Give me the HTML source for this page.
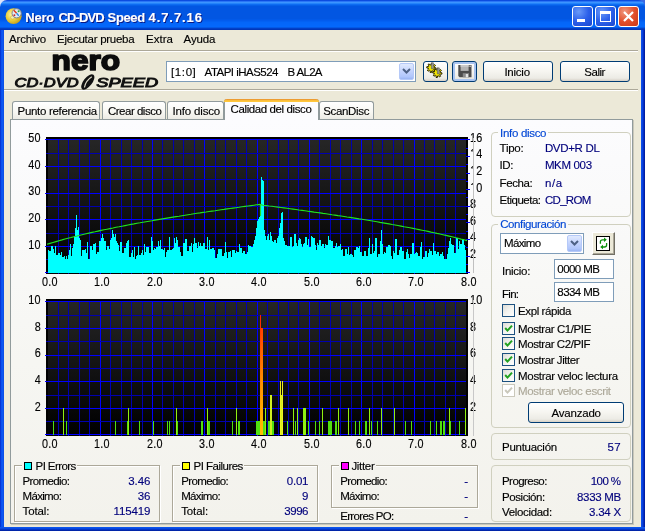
<!DOCTYPE html>
<html lang="es"><head><meta charset="utf-8"><title>Nero CD-DVD Speed 4.7.7.16</title>
<style>
html,body{margin:0;padding:0;background:#ece9d8;}
body{width:645px;height:531px;overflow:hidden;font-family:"Liberation Sans",sans-serif;font-size:11px;}
#win{will-change:transform;position:relative;width:645px;height:531px;overflow:hidden;background:#ece9d8;}
.abs{position:absolute;}
.t{position:absolute;white-space:nowrap;line-height:14px;height:14px;font-size:11.5px;-webkit-text-stroke:0.14px currentColor;}
#cornerL{position:absolute;left:0;top:0;width:8px;height:8px;background:#dde3fa;}
#cornerR{position:absolute;right:0;top:0;width:8px;height:8px;background:#3a68e2;}
#title{position:absolute;left:0;top:0;width:645px;height:30px;border-radius:7px 7px 0 0;
 background:linear-gradient(to bottom,#0c4ce0 0.5px,#2a76f6 1.5px,#3c94ff 2.5px,#2484fa 3.5px,#0e6cf2 4.5px,#0560e8 5.5px,#0256e2 6.5px,#0256e2 18.5px,#025cee 20.5px,#0466f8 22.5px,#0468fc 26.5px,#035ae6 27.5px,#0240c8 28.5px,#0136b8 29.5px);}
#frameL{position:absolute;left:0;top:30px;width:4px;height:501px;background:linear-gradient(to right,#0428c8 0,#0850ee 35%,#0c58f2 60%,#0a4ce2 100%);}
#frameR{position:absolute;right:0;top:30px;width:4px;height:501px;background:linear-gradient(to right,#0c54ee 0,#0840dc 40%,#0228bc 70%,#001890 100%);}
#frameB{position:absolute;left:0;bottom:0;width:645px;height:4px;background:linear-gradient(to bottom,#0c5af0 0,#0848e0 40%,#0230c0 70%,#001c98 100%);}
.tb{position:absolute;top:6px;width:21px;height:21px;box-sizing:border-box;border:1px solid #fff;border-radius:3px;
 background:radial-gradient(circle at 30% 25%,#6a9af8 0,#2c60ea 50%,#1846d0 100%);}
.tb.close{background:radial-gradient(circle at 30% 25%,#f09880 0,#e2502c 50%,#c83818 100%);}
.hsep{position:absolute;left:4px;width:634px;height:1px;}
.btn{position:absolute;box-sizing:border-box;border:1px solid #003c74;border-radius:3px;
 background:linear-gradient(to bottom,#ffffff 0,#f6f5f0 50%,#ecebe5 85%,#d6d0c5 100%);}
.btn.def{box-shadow:inset 0 0 0 2px #a9c4f0;}
.combo{position:absolute;box-sizing:border-box;border:1px solid #7f9db9;background:#fff;}
.dd{position:absolute;box-sizing:border-box;border:1px solid #b5c9f8;border-radius:2px;
 background:linear-gradient(to bottom,#e1eafe 0,#c3d3fd 50%,#b0c6fb 85%,#9ab4f2 100%);}
.edit{position:absolute;box-sizing:border-box;border:1px solid #7f9db9;background:#fff;}
.tab{position:absolute;box-sizing:border-box;border:1px solid #919b9c;border-bottom:none;border-radius:3px 3px 0 0;
 background:linear-gradient(to bottom,#ffffff 0,#f7f7f2 60%,#ecebe4 100%);}
.tab.act{background:#fcfcfe;border-top:none;}
.tab.act:before{content:"";position:absolute;left:-1px;right:-1px;top:0;height:3px;border-radius:3px 3px 0 0;
 background:linear-gradient(to bottom,#e68b2c 0,#ffc73c 60%,#ffc73c 100%);}
#page{position:absolute;left:10px;top:119px;width:623px;height:405px;box-sizing:border-box;border:1px solid #919b9c;
 background:linear-gradient(to bottom,#fcfcfe 0,#f6f6f2 60%,#f3f2ec 100%);box-shadow:1px 1px 0 #c9c7ba;}
.gb{position:absolute;box-sizing:border-box;border:1px solid #d0d0bf;border-radius:4px;}
.gbe{position:absolute;box-sizing:border-box;border:1px solid #aca899;box-shadow:1px 1px 0 #fff, inset 1px 1px 0 #fff;}
.leg{position:absolute;height:4px;}
.sq{position:absolute;box-sizing:border-box;width:8px;height:8px;border:1px solid #000;}
.cb{position:absolute;box-sizing:border-box;width:13px;height:13px;border:1px solid #1c5180;
 background:linear-gradient(135deg,#dcdcd7 0,#f3f3ef 50%,#ffffff 100%);}
.cb.dis{border-color:#cac8bb;background:#fff;}

</style></head>
<body>
<div id="win">
<div id="cornerL"></div><div id="cornerR"></div>
<div id="title"></div>
<div id="frameL"></div><div id="frameR"></div><div id="frameB"></div>
<!-- title icon -->
<svg class="abs" style="left:5px;top:7px" width="18" height="18" viewBox="0 0 18 18">
 <defs><radialGradient id="gold" cx="0.38" cy="0.4" r="0.75"><stop offset="0" stop-color="#fff8a8"/><stop offset="0.45" stop-color="#ecd040"/><stop offset="0.85" stop-color="#c8a018"/><stop offset="1" stop-color="#98780c"/></radialGradient></defs>
 <ellipse cx="8.6" cy="9.2" rx="8" ry="7.9" fill="url(#gold)"/>
 <ellipse cx="7.6" cy="10.4" rx="2" ry="1.7" fill="#f6eeb4" stroke="#c8a828" stroke-width="0.5"/>
 <circle cx="11.6" cy="6.3" r="4.6" fill="#e4ecf4" stroke="#7c848e" stroke-width="1"/>
 <path d="M11.6 6.3L8.8 3.2" stroke="#e03818" stroke-width="1.4"/>
 <path d="M11.6 6.3l2.2 2.4" stroke="#2888e8" stroke-width="1.4"/>
 <circle cx="13.6" cy="4.2" r="1" fill="#28a848"/>
 <circle cx="9.4" cy="8.3" r="1" fill="#c82828"/>
</svg>
<div class="tb" style="left:572px"><div class="abs" style="left:4px;top:12px;width:8px;height:3px;background:#fff"></div></div>
<div class="tb" style="left:595px"><div class="abs" style="left:4px;top:4px;width:11px;height:11px;box-sizing:border-box;border:1px solid #fff;border-top-width:3px"></div></div>
<div class="tb close" style="left:618px"><svg class="abs" style="left:0;top:0" width="19" height="19" viewBox="0 0 19 19"><path d="M5 5l9 9M14 5l-9 9" stroke="#fff" stroke-width="2.2" fill="none"/></svg></div>

<!-- toolbar separators -->
<div class="hsep" style="top:50px;background:#aca899"></div><div class="hsep" style="top:51px;background:#fff"></div>
<div class="hsep" style="top:89px;background:#aca899"></div><div class="hsep" style="top:90px;background:#fff"></div>

<!-- logo -->
<svg class="abs" style="left:8px;top:50px" width="156" height="40" viewBox="8 50 156 40">
 <text x="51.6" y="69.8" font-family="Liberation Sans, sans-serif" font-weight="bold" font-size="28" textLength="68.5" lengthAdjust="spacingAndGlyphs" fill="#0c0c0c" stroke="#0c0c0c" stroke-width="1.7" stroke-linejoin="round">nero</text>
 <text x="14.6" y="86.8" font-family="Liberation Sans, sans-serif" font-style="italic" font-size="12.6" textLength="64" lengthAdjust="spacingAndGlyphs" fill="#111" stroke="#111" stroke-width="0.9">CD·DVD</text>
 <text x="96.2" y="86.8" font-family="Liberation Sans, sans-serif" font-style="italic" font-size="12.6" textLength="62" lengthAdjust="spacingAndGlyphs" fill="#111" stroke="#111" stroke-width="0.9">SPEED</text>
 <g transform="translate(87.8 81.9) rotate(-52)"><ellipse cx="0" cy="0" rx="9.2" ry="4.3" fill="#111"/><path d="M-6.5 0.8C-2 -1.6 2 -1.6 6.5 0" stroke="#ddd9c8" stroke-width="1.2" fill="none"/></g>
</svg>

<!-- drive combobox -->
<div class="combo" style="left:166px;top:61px;width:250px;height:21px"></div>
<div class="dd" style="left:399px;top:63px;width:15px;height:17px"></div>
<svg class="abs" style="left:402px;top:68px" width="9" height="7" viewBox="0 0 9 7"><path d="M1 1l3.5 3.5L8 1" stroke="#4d6185" stroke-width="2" fill="none"/></svg>

<!-- toolbar buttons -->
<div class="btn" style="left:423px;top:61px;width:25px;height:21px"></div>
<svg class="abs" style="left:423px;top:61px" width="25" height="21" viewBox="0 0 25 21">
 <path d="M13.10 6.90L12.92 8.18L11.26 8.09L10.83 8.82L11.72 10.22L10.70 11.00L9.59 9.76L8.76 9.98L8.40 11.60L7.12 11.42L7.21 9.76L6.48 9.33L5.08 10.22L4.30 9.20L5.54 8.09L5.32 7.26L3.70 6.90L3.88 5.62L5.54 5.71L5.97 4.98L5.08 3.58L6.10 2.80L7.21 4.04L8.04 3.82L8.40 2.20L9.68 2.38L9.59 4.04L10.32 4.47L11.72 3.58L12.50 4.60L11.26 5.71L11.48 6.54Z" fill="#f4e800" stroke="#2a2400" stroke-width="1" stroke-linejoin="round"/>
 <path d="M19.00 11.90L18.82 13.18L17.16 13.09L16.73 13.82L17.62 15.22L16.60 16.00L15.49 14.76L14.66 14.98L14.30 16.60L13.02 16.42L13.11 14.76L12.38 14.33L10.98 15.22L10.20 14.20L11.44 13.09L11.22 12.26L9.60 11.90L9.78 10.62L11.44 10.71L11.87 9.98L10.98 8.58L12.00 7.80L13.11 9.04L13.94 8.82L14.30 7.20L15.58 7.38L15.49 9.04L16.22 9.47L17.62 8.58L18.40 9.60L17.16 10.71L17.38 11.54Z" fill="#f4e800" stroke="#2a2400" stroke-width="1" stroke-linejoin="round"/>
 <path d="M8.4 1.8h2v6h-2z" fill="#9a9a9a" stroke="#444" stroke-width="0.5"/>
 <path d="M14.3 6.9h2v6h-2z" fill="#9a9a9a" stroke="#444" stroke-width="0.5"/>
</svg>
<div class="btn def" style="left:452px;top:61px;width:25px;height:21px"></div>
<svg class="abs" style="left:458px;top:64px" width="14" height="14" viewBox="0 0 14 14">
 <path d="M0.3 1h13.2v12.3H1.6L0.3 12z" fill="#4c4c4c"/>
 <rect x="2.6" y="1" width="8" height="5.9" fill="#b4b4b4"/>
 <rect x="2.6" y="1" width="8" height="2" fill="#c8c8c8"/>
 <rect x="4.8" y="9.2" width="6.2" height="4.1" fill="#8c8c8c"/>
 <rect x="7.8" y="10" width="2.2" height="3.3" fill="#e4e4e4"/>
 <rect x="11.5" y="1.6" width="1.2" height="1.2" fill="#fff"/>
</svg>
<div class="btn" style="left:483px;top:61px;width:70px;height:21px"></div>
<div class="btn" style="left:560px;top:61px;width:70px;height:21px"></div>

<!-- tabs -->
<div id="page"></div>
<div class="tab" style="left:12px;top:101px;width:88px;height:18px"></div>
<div class="tab" style="left:102px;top:101px;width:64px;height:18px"></div>
<div class="tab" style="left:167px;top:101px;width:57px;height:18px"></div>
<div class="tab" style="left:319px;top:101px;width:55px;height:18px"></div>
<div class="tab act" style="left:224px;top:99px;width:95px;height:21px"></div>

<!-- right group boxes -->
<div class="gb" style="left:491px;top:132px;width:140px;height:85px"></div>
<div class="leg" style="left:498px;top:130px;width:50px;background:#fbfbfc"></div>
<div class="gb" style="left:491px;top:224px;width:140px;height:204px"></div>
<div class="leg" style="left:498px;top:222px;width:70px;background:#f9f9f8"></div>
<div class="gb" style="left:491px;top:433px;width:140px;height:27px"></div>
<div class="gb" style="left:491px;top:465px;width:140px;height:57px"></div>

<div class="combo" style="left:500px;top:233px;width:84px;height:21px"></div>
<div class="dd" style="left:567px;top:235px;width:15px;height:17px"></div>
<svg class="abs" style="left:570px;top:240px" width="9" height="7" viewBox="0 0 9 7"><path d="M1 1l3.5 3.5L8 1" stroke="#4d6185" stroke-width="2" fill="none"/></svg>
<!-- refresh button classic -->
<div class="abs" style="left:592px;top:232px;width:23px;height:23px;box-sizing:border-box;background:#ece9d8;border:1px solid;border-color:#fff #716f64 #716f64 #fff;box-shadow:inset -1px -1px 0 #aca899"></div>
<div class="abs" style="left:596px;top:236px;width:14px;height:15px;box-sizing:border-box;background:#fff;border:1px solid #000"></div>
<svg class="abs" style="left:596px;top:235px" width="15" height="17" viewBox="0 0 15 17">
 <g fill="none" stroke="#0e900e" stroke-width="1.3"><path d="M4.4 8.8V6.8Q4.4 4.8 6.6 4.8H8.4"/><path d="M10.6 8V10Q10.6 12 8.4 12H6.6"/></g>
 <path d="M8 2.6l2.8 2.2-2.8 2.2z" fill="#0e900e"/><path d="M7 9.8l-2.8 2.2 2.8 2.2z" fill="#0e900e"/>
</svg>

<div class="edit" style="left:554px;top:259px;width:60px;height:20px"></div>
<div class="edit" style="left:554px;top:282px;width:60px;height:20px"></div>

<div class="cb" style="left:502px;top:304px"></div>
<div class="cb" style="left:502px;top:322px"></div>
<div class="cb" style="left:502px;top:337px"></div>
<div class="cb" style="left:502px;top:353px"></div>
<div class="cb" style="left:502px;top:369px"></div>
<div class="cb dis" style="left:502px;top:384px"></div>
<svg class="abs" style="left:502px;top:322px" width="13" height="76" viewBox="0 0 13 76">
 <g fill="none" stroke="#21a121" stroke-width="2">
 <path d="M3.2 6l2.3 2.6L10 3.6"/><path d="M3.2 21l2.3 2.6L10 18.6"/><path d="M3.2 37l2.3 2.6L10 34.6"/><path d="M3.2 53l2.3 2.6L10 50.6"/>
 <path d="M3.2 68l2.3 2.6L10 65.6" stroke="#cac8bb"/></g>
</svg>
<div class="btn" style="left:528px;top:402px;width:96px;height:21px"></div>

<!-- bottom group boxes (classic etched) -->
<div class="gbe" style="left:14px;top:465px;width:146px;height:57px"></div>
<div class="leg" style="left:22px;top:463px;width:55px;height:5px;background:#f4f3ee"></div>
<div class="sq" style="left:24px;top:462px;background:#00ffff"></div>
<div class="gbe" style="left:172px;top:465px;width:146px;height:57px"></div>
<div class="leg" style="left:180px;top:463px;width:64px;height:5px;background:#f4f3ee"></div>
<div class="sq" style="left:182px;top:462px;background:#ffff00"></div>
<div class="gbe" style="left:331px;top:465px;width:147px;height:43px"></div>
<div class="leg" style="left:339px;top:463px;width:37px;height:5px;background:#f4f3ee"></div>
<div class="sq" style="left:341px;top:462px;background:#ff00ff"></div>


<svg class="abs" style="left:0;top:0" width="645" height="531" viewBox="0 0 645 531">
<defs><linearGradient id="bg" x1="0" y1="0" x2="0" y2="1"><stop offset="0" stop-color="#262626"/><stop offset="1" stop-color="#000"/></linearGradient><linearGradient id="hot" x1="0" y1="0" x2="0" y2="1"><stop offset="0" stop-color="#ff4000"/><stop offset="0.5" stop-color="#ff9000"/><stop offset="1" stop-color="#ffc000"/></linearGradient><linearGradient id="hot2" x1="0" y1="0" x2="0" y2="1"><stop offset="0" stop-color="#ff2000"/><stop offset="0.5" stop-color="#ff8000"/><stop offset="1" stop-color="#ffc000"/></linearGradient></defs>
<g shape-rendering="crispEdges">
<rect x="46" y="137" width="422" height="137" fill="#000"/>
<rect x="48" y="139" width="418" height="133.5" fill="url(#bg)"/>
<line x1="58.5" x2="58.5" y1="139.5" y2="274" stroke="#0000b0"/>
<line x1="68.5" x2="68.5" y1="139.5" y2="274" stroke="#0000b0"/>
<line x1="79.5" x2="79.5" y1="139.5" y2="274" stroke="#0000b0"/>
<line x1="89.5" x2="89.5" y1="139.5" y2="274" stroke="#0000b0"/>
<line x1="100.5" x2="100.5" y1="139.5" y2="274" stroke="#0000ff"/>
<line x1="110.5" x2="110.5" y1="139.5" y2="274" stroke="#0000b0"/>
<line x1="121.5" x2="121.5" y1="139.5" y2="274" stroke="#0000b0"/>
<line x1="131.5" x2="131.5" y1="139.5" y2="274" stroke="#0000b0"/>
<line x1="142.5" x2="142.5" y1="139.5" y2="274" stroke="#0000b0"/>
<line x1="152.5" x2="152.5" y1="139.5" y2="274" stroke="#0000ff"/>
<line x1="162.5" x2="162.5" y1="139.5" y2="274" stroke="#0000b0"/>
<line x1="173.5" x2="173.5" y1="139.5" y2="274" stroke="#0000b0"/>
<line x1="183.5" x2="183.5" y1="139.5" y2="274" stroke="#0000b0"/>
<line x1="194.5" x2="194.5" y1="139.5" y2="274" stroke="#0000b0"/>
<line x1="204.5" x2="204.5" y1="139.5" y2="274" stroke="#0000ff"/>
<line x1="215.5" x2="215.5" y1="139.5" y2="274" stroke="#0000b0"/>
<line x1="225.5" x2="225.5" y1="139.5" y2="274" stroke="#0000b0"/>
<line x1="236.5" x2="236.5" y1="139.5" y2="274" stroke="#0000b0"/>
<line x1="246.5" x2="246.5" y1="139.5" y2="274" stroke="#0000b0"/>
<line x1="257.5" x2="257.5" y1="139.5" y2="274" stroke="#0000ff"/>
<line x1="267.5" x2="267.5" y1="139.5" y2="274" stroke="#0000b0"/>
<line x1="278.5" x2="278.5" y1="139.5" y2="274" stroke="#0000b0"/>
<line x1="288.5" x2="288.5" y1="139.5" y2="274" stroke="#0000b0"/>
<line x1="298.5" x2="298.5" y1="139.5" y2="274" stroke="#0000b0"/>
<line x1="309.5" x2="309.5" y1="139.5" y2="274" stroke="#0000ff"/>
<line x1="319.5" x2="319.5" y1="139.5" y2="274" stroke="#0000b0"/>
<line x1="330.5" x2="330.5" y1="139.5" y2="274" stroke="#0000b0"/>
<line x1="340.5" x2="340.5" y1="139.5" y2="274" stroke="#0000b0"/>
<line x1="351.5" x2="351.5" y1="139.5" y2="274" stroke="#0000b0"/>
<line x1="361.5" x2="361.5" y1="139.5" y2="274" stroke="#0000ff"/>
<line x1="372.5" x2="372.5" y1="139.5" y2="274" stroke="#0000b0"/>
<line x1="382.5" x2="382.5" y1="139.5" y2="274" stroke="#0000b0"/>
<line x1="393.5" x2="393.5" y1="139.5" y2="274" stroke="#0000b0"/>
<line x1="403.5" x2="403.5" y1="139.5" y2="274" stroke="#0000b0"/>
<line x1="414.5" x2="414.5" y1="139.5" y2="274" stroke="#0000ff"/>
<line x1="424.5" x2="424.5" y1="139.5" y2="274" stroke="#0000b0"/>
<line x1="434.5" x2="434.5" y1="139.5" y2="274" stroke="#0000b0"/>
<line x1="445.5" x2="445.5" y1="139.5" y2="274" stroke="#0000b0"/>
<line x1="455.5" x2="455.5" y1="139.5" y2="274" stroke="#0000b0"/>
<line x1="45" x2="466" y1="139.5" y2="139.5" stroke="#0000ff"/>
<line x1="46" x2="466" y1="153.5" y2="153.5" stroke="#0000b0"/>
<line x1="45" x2="466" y1="166.5" y2="166.5" stroke="#0000ff"/>
<line x1="46" x2="466" y1="179.5" y2="179.5" stroke="#0000b0"/>
<line x1="45" x2="466" y1="193.5" y2="193.5" stroke="#0000ff"/>
<line x1="46" x2="466" y1="206.5" y2="206.5" stroke="#0000b0"/>
<line x1="45" x2="466" y1="219.5" y2="219.5" stroke="#0000ff"/>
<line x1="46" x2="466" y1="233.5" y2="233.5" stroke="#0000b0"/>
<line x1="45" x2="466" y1="246.5" y2="246.5" stroke="#0000ff"/>
<line x1="46" x2="466" y1="259.5" y2="259.5" stroke="#0000b0"/>
<line x1="45" x2="466" y1="272.5" y2="272.5" stroke="#0000ff"/>
<line x1="466" x2="470" y1="139.5" y2="139.5" stroke="#0000ff"/>
<line x1="466" x2="468" y1="148.5" y2="148.5" stroke="#0000ff"/>
<line x1="466" x2="470" y1="156.5" y2="156.5" stroke="#0000ff"/>
<line x1="466" x2="468" y1="164.5" y2="164.5" stroke="#0000ff"/>
<line x1="466" x2="470" y1="173.5" y2="173.5" stroke="#0000ff"/>
<line x1="466" x2="468" y1="181.5" y2="181.5" stroke="#0000ff"/>
<line x1="466" x2="470" y1="189.5" y2="189.5" stroke="#0000ff"/>
<line x1="466" x2="468" y1="197.5" y2="197.5" stroke="#0000ff"/>
<line x1="466" x2="470" y1="206.5" y2="206.5" stroke="#0000ff"/>
<line x1="466" x2="468" y1="214.5" y2="214.5" stroke="#0000ff"/>
<line x1="466" x2="470" y1="222.5" y2="222.5" stroke="#0000ff"/>
<line x1="466" x2="468" y1="231.5" y2="231.5" stroke="#0000ff"/>
<line x1="466" x2="470" y1="239.5" y2="239.5" stroke="#0000ff"/>
<line x1="466" x2="468" y1="247.5" y2="247.5" stroke="#0000ff"/>
<line x1="466" x2="470" y1="256.5" y2="256.5" stroke="#0000ff"/>
<line x1="466" x2="468" y1="264.5" y2="264.5" stroke="#0000ff"/>
<line x1="466" x2="470" y1="272.5" y2="272.5" stroke="#0000ff"/>
</g>
<path d="M48 273L48 249.5h1L49 250.5h1L50 250.5h1L51 245.6h1L52 245.6h1L53 249.3h1L54 252.6h1L55 245.9h1L56 254.9h1L57 255.3h1L58 252.6h1L59 252.6h1L60 254.7h1L61 252.0h1L62 256.5h1L63 256.5h1L64 255.8h1L65 258.9h1L66 256.2h1L67 258.9h1L68 255.3h1L69 250.3h1L70 243.9h1L71 256.2h1L72 248.4h1L73 243.7h1L74 235.8h1L75 227.8h1L76 214.5h1L77 230.4h1L78 227.2h1L79 238.4h1L80 240.3h1L81 255.8h1L82 249.6h1L83 249.6h1L84 249.9h1L85 249.0h1L86 253.2h1L87 242.3h1L88 258.9h1L89 258.9h1L90 246.2h1L91 246.2h1L92 249.6h1L93 244.0h1L94 244.0h1L95 242.7h1L96 253.5h1L97 251.9h1L98 251.9h1L99 241.1h1L100 241.1h1L101 238.4h1L102 233.9h1L103 238.4h1L104 240.5h1L105 240.5h1L106 249.5h1L107 246.1h1L108 246.1h1L109 248.5h1L110 240.1h1L111 238.4h1L112 230.4h1L113 234.4h1L114 237.1h1L115 234.4h1L116 241.1h1L117 243.2h1L118 245.2h1L119 250.5h1L120 241.8h1L121 241.8h1L122 252.8h1L123 252.8h1L124 247.7h1L125 247.7h1L126 243.4h1L127 241.1h1L128 239.8h1L129 256.8h1L130 256.8h1L131 253.1h1L132 249.9h1L133 256.5h1L134 246.9h1L135 258.9h1L136 256.1h1L137 255.0h1L138 245.5h1L139 255.3h1L140 255.3h1L141 252.8h1L142 250.2h1L143 254.8h1L144 244.1h1L145 252.2h1L146 246.8h1L147 246.5h1L148 246.5h1L149 253.3h1L150 253.3h1L151 237.4h1L152 241.1h1L153 250.0h1L154 247.9h1L155 248.5h1L156 246.5h1L157 247.3h1L158 241.4h1L159 245.8h1L160 239.8h1L161 248.6h1L162 248.6h1L163 249.6h1L164 248.2h1L165 256.8h1L166 251.6h1L167 250.2h1L168 250.2h1L169 237.2h1L170 249.7h1L171 249.7h1L172 249.0h1L173 248.1h1L174 238.4h1L175 242.8h1L176 237.1h1L177 240.3h1L178 247.1h1L179 247.1h1L180 252.1h1L181 255.8h1L182 255.8h1L183 242.5h1L184 242.5h1L185 238.9h1L186 238.9h1L187 250.7h1L188 250.7h1L189 246.2h1L190 246.2h1L191 242.7h1L192 251.6h1L193 244.4h1L194 238.0h1L195 242.6h1L196 242.6h1L197 248.1h1L198 242.2h1L199 246.3h1L200 242.9h1L201 245.8h1L202 245.7h1L203 243.0h1L204 243.0h1L205 249.3h1L206 249.3h1L207 236.9h1L208 250.1h1L209 239.6h1L210 248.6h1L211 248.6h1L212 248.4h1L213 248.4h1L214 250.4h1L215 258.2h1L216 258.2h1L217 253.7h1L218 248.8h1L219 248.8h1L220 248.5h1L221 248.5h1L222 256.0h1L223 256.0h1L224 253.0h1L225 242.2h1L226 252.4h1L227 258.2h1L228 251.5h1L229 251.6h1L230 251.1h1L231 256.7h1L232 250.0h1L233 249.8h1L234 249.8h1L235 253.0h1L236 250.5h1L237 251.5h1L238 251.5h1L239 243.6h1L240 247.5h1L241 247.5h1L242 253.0h1L243 251.0h1L244 251.0h1L245 254.2h1L246 254.2h1L247 252.1h1L248 244.7h1L249 245.5h1L250 245.5h1L251 247.1h1L252 247.1h1L253 244.0h1L254 239.8h1L255 235.8h1L256 227.8h1L257 221.1h1L258 218.5h1L259 217.1h1L260 214.5h1L261 177.2h1L262 179.9h1L263 181.2h1L264 230.4h1L265 235.8h1L266 239.8h1L267 235.8h1L268 234.4h1L269 239.8h1L270 231.8h1L271 235.8h1L272 241.1h1L273 242.3h1L274 240.2h1L275 240.2h1L276 242.6h1L277 238.4h1L278 235.8h1L279 227.8h1L280 222.5h1L281 212.6h1L282 211.8h1L283 238.4h1L284 241.1h1L285 245.1h1L286 245.1h1L287 246.0h1L288 246.0h1L289 246.1h1L290 236.5h1L291 236.5h1L292 246.6h1L293 246.4h1L294 233.9h1L295 233.9h1L296 243.4h1L297 245.9h1L298 240.0h1L299 237.7h1L300 238.7h1L301 244.3h1L302 247.4h1L303 243.9h1L304 242.6h1L305 237.4h1L306 237.4h1L307 244.8h1L308 238.7h1L309 246.9h1L310 246.9h1L311 235.8h1L312 237.1h1L313 238.0h1L314 238.0h1L315 244.5h1L316 249.7h1L317 242.8h1L318 244.7h1L319 240.2h1L320 240.2h1L321 245.6h1L322 244.3h1L323 244.3h1L324 247.5h1L325 244.1h1L326 244.5h1L327 244.5h1L328 236.3h1L329 240.3h1L330 240.3h1L331 240.9h1L332 240.9h1L333 247.9h1L334 247.9h1L335 245.6h1L336 243.3h1L337 246.6h1L338 246.3h1L339 246.3h1L340 243.9h1L341 249.5h1L342 248.7h1L343 255.6h1L344 255.6h1L345 248.6h1L346 248.6h1L347 254.3h1L348 247.2h1L349 254.6h1L350 253.8h1L351 253.8h1L352 254.5h1L353 257.2h1L354 250.2h1L355 250.2h1L356 247.0h1L357 247.0h1L358 247.9h1L359 245.9h1L360 252.4h1L361 252.4h1L362 255.7h1L363 256.4h1L364 250.7h1L365 250.7h1L366 255.7h1L367 255.7h1L368 248.1h1L369 237.9h1L370 253.8h1L371 253.8h1L372 243.5h1L373 252.7h1L374 250.8h1L375 237.5h1L376 237.5h1L377 256.9h1L378 254.4h1L379 253.6h1L380 241.1h1L381 229.9h1L382 243.7h1L383 254.1h1L384 252.1h1L385 253.1h1L386 247.3h1L387 247.3h1L388 245.2h1L389 245.2h1L390 246.4h1L391 256.1h1L392 258.9h1L393 251.3h1L394 252.5h1L395 238.8h1L396 238.8h1L397 254.9h1L398 254.9h1L399 250.4h1L400 247.4h1L401 247.4h1L402 251.3h1L403 251.3h1L404 258.9h1L405 258.9h1L406 251.9h1L407 248.9h1L408 253.9h1L409 258.3h1L410 253.8h1L411 253.8h1L412 243.0h1L413 243.0h1L414 254.1h1L415 252.6h1L416 252.3h1L417 253.3h1L418 256.1h1L419 256.1h1L420 246.8h1L421 241.6h1L422 258.9h1L423 256.6h1L424 256.6h1L425 250.7h1L426 250.5h1L427 256.5h1L428 252.9h1L429 249.1h1L430 251.3h1L431 251.3h1L432 255.2h1L433 242.7h1L434 250.6h1L435 250.6h1L436 253.6h1L437 251.5h1L438 251.5h1L439 255.7h1L440 253.6h1L441 253.6h1L442 251.6h1L443 256.4h1L444 258.5h1L445 258.5h1L446 258.5h1L447 253.7h1L448 248.3h1L449 241.1h1L450 237.6h1L451 243.7h1L452 245.1h1L453 245.1h1L454 252.6h1L455 252.6h1L456 238.2h1L457 238.2h1L458 248.7h1L459 240.8h1L460 243.7h1L461 243.7h1L462 239.2h1L463 239.2h1L464 244.8h1L465 250.3h1L466 273Z" fill="#00ffff" shape-rendering="crispEdges"/>
<path d="M47.0 244.3L50.0 243.4L53.0 242.5L56.0 241.6L59.0 240.7L62.0 239.9L65.0 239.0L68.0 238.2L71.0 237.5L74.0 236.7L77.0 236.0L80.0 235.2L83.0 234.5L86.0 233.8L89.0 233.1L92.0 232.4L95.0 231.8L98.0 231.1L101.0 230.4L104.0 229.8L107.0 229.2L110.0 228.6L113.0 228.0L116.0 227.3L119.0 226.8L122.0 226.2L125.0 225.6L128.0 225.0L131.0 224.4L134.0 223.9L137.0 223.3L140.0 222.8L143.0 222.2L146.0 221.7L149.0 221.2L152.0 220.7L155.0 220.1L158.0 219.6L161.0 219.1L164.0 218.6L167.0 218.1L170.0 217.6L173.0 217.1L176.0 216.6L179.0 216.2L182.0 215.7L185.0 215.2L188.0 214.7L191.0 214.3L194.0 213.8L197.0 213.3L200.0 212.9L203.0 212.4L206.0 212.0L209.0 211.5L212.0 211.1L215.0 210.7L218.0 210.2L221.0 209.8L224.0 209.4L227.0 208.9L230.0 208.5L233.0 208.1L236.0 207.7L239.0 207.3L242.0 206.8L245.0 206.4L248.0 206.0L251.0 205.6L254.0 205.2L257.0 204.8L260.0 204.4L263.0 205.2L266.0 205.6L269.0 206.0L272.0 206.3L275.0 206.7L278.0 207.1L281.0 207.5L284.0 207.9L287.0 208.3L290.0 208.7L293.0 209.1L296.0 209.5L299.0 210.0L302.0 210.4L305.0 210.8L308.0 211.2L311.0 211.6L314.0 212.1L317.0 212.5L320.0 212.9L323.0 213.4L326.0 213.8L329.0 214.2L332.0 214.7L335.0 215.1L338.0 215.6L341.0 216.0L344.0 216.5L347.0 217.0L350.0 217.4L353.0 217.9L356.0 218.4L359.0 218.9L362.0 219.3L365.0 219.8L368.0 220.3L371.0 220.8L374.0 221.3L377.0 221.8L380.0 222.4L383.0 222.9L386.0 223.4L389.0 223.9L392.0 224.5L395.0 225.0L398.0 225.5L401.0 226.1L404.0 226.7L407.0 227.2L410.0 227.8L413.0 228.4L416.0 229.0L419.0 229.6L422.0 230.2L425.0 230.8L428.0 231.4L431.0 232.1L434.0 232.7L437.0 233.4L440.0 234.0L443.0 234.7L446.0 235.4L449.0 236.1L452.0 236.8L455.0 237.5L458.0 238.3L461.0 239.1L464.0 239.8L467.0 240.6" fill="none" stroke="#20e420" stroke-width="1.15"/>
<path d="M260.5 204V216" stroke="#22e222" stroke-width="1.2" fill="none"/>
<g shape-rendering="crispEdges">
<rect x="46" y="299" width="422" height="137" fill="#000"/>
<rect x="48" y="301" width="418" height="133.5" fill="url(#bg)"/>
<line x1="58.5" x2="58.5" y1="301.5" y2="436" stroke="#0000b0"/>
<line x1="68.5" x2="68.5" y1="301.5" y2="436" stroke="#0000b0"/>
<line x1="79.5" x2="79.5" y1="301.5" y2="436" stroke="#0000b0"/>
<line x1="89.5" x2="89.5" y1="301.5" y2="436" stroke="#0000b0"/>
<line x1="100.5" x2="100.5" y1="301.5" y2="436" stroke="#0000ff"/>
<line x1="110.5" x2="110.5" y1="301.5" y2="436" stroke="#0000b0"/>
<line x1="121.5" x2="121.5" y1="301.5" y2="436" stroke="#0000b0"/>
<line x1="131.5" x2="131.5" y1="301.5" y2="436" stroke="#0000b0"/>
<line x1="142.5" x2="142.5" y1="301.5" y2="436" stroke="#0000b0"/>
<line x1="152.5" x2="152.5" y1="301.5" y2="436" stroke="#0000ff"/>
<line x1="162.5" x2="162.5" y1="301.5" y2="436" stroke="#0000b0"/>
<line x1="173.5" x2="173.5" y1="301.5" y2="436" stroke="#0000b0"/>
<line x1="183.5" x2="183.5" y1="301.5" y2="436" stroke="#0000b0"/>
<line x1="194.5" x2="194.5" y1="301.5" y2="436" stroke="#0000b0"/>
<line x1="204.5" x2="204.5" y1="301.5" y2="436" stroke="#0000ff"/>
<line x1="215.5" x2="215.5" y1="301.5" y2="436" stroke="#0000b0"/>
<line x1="225.5" x2="225.5" y1="301.5" y2="436" stroke="#0000b0"/>
<line x1="236.5" x2="236.5" y1="301.5" y2="436" stroke="#0000b0"/>
<line x1="246.5" x2="246.5" y1="301.5" y2="436" stroke="#0000b0"/>
<line x1="257.5" x2="257.5" y1="301.5" y2="436" stroke="#0000ff"/>
<line x1="267.5" x2="267.5" y1="301.5" y2="436" stroke="#0000b0"/>
<line x1="278.5" x2="278.5" y1="301.5" y2="436" stroke="#0000b0"/>
<line x1="288.5" x2="288.5" y1="301.5" y2="436" stroke="#0000b0"/>
<line x1="298.5" x2="298.5" y1="301.5" y2="436" stroke="#0000b0"/>
<line x1="309.5" x2="309.5" y1="301.5" y2="436" stroke="#0000ff"/>
<line x1="319.5" x2="319.5" y1="301.5" y2="436" stroke="#0000b0"/>
<line x1="330.5" x2="330.5" y1="301.5" y2="436" stroke="#0000b0"/>
<line x1="340.5" x2="340.5" y1="301.5" y2="436" stroke="#0000b0"/>
<line x1="351.5" x2="351.5" y1="301.5" y2="436" stroke="#0000b0"/>
<line x1="361.5" x2="361.5" y1="301.5" y2="436" stroke="#0000ff"/>
<line x1="372.5" x2="372.5" y1="301.5" y2="436" stroke="#0000b0"/>
<line x1="382.5" x2="382.5" y1="301.5" y2="436" stroke="#0000b0"/>
<line x1="393.5" x2="393.5" y1="301.5" y2="436" stroke="#0000b0"/>
<line x1="403.5" x2="403.5" y1="301.5" y2="436" stroke="#0000b0"/>
<line x1="414.5" x2="414.5" y1="301.5" y2="436" stroke="#0000ff"/>
<line x1="424.5" x2="424.5" y1="301.5" y2="436" stroke="#0000b0"/>
<line x1="434.5" x2="434.5" y1="301.5" y2="436" stroke="#0000b0"/>
<line x1="445.5" x2="445.5" y1="301.5" y2="436" stroke="#0000b0"/>
<line x1="455.5" x2="455.5" y1="301.5" y2="436" stroke="#0000b0"/>
<line x1="45" x2="466" y1="301.5" y2="301.5" stroke="#0000ff"/>
<line x1="46" x2="466" y1="315.5" y2="315.5" stroke="#0000b0"/>
<line x1="45" x2="466" y1="328.5" y2="328.5" stroke="#0000ff"/>
<line x1="46" x2="466" y1="341.5" y2="341.5" stroke="#0000b0"/>
<line x1="45" x2="466" y1="355.5" y2="355.5" stroke="#0000ff"/>
<line x1="46" x2="466" y1="368.5" y2="368.5" stroke="#0000b0"/>
<line x1="45" x2="466" y1="381.5" y2="381.5" stroke="#0000ff"/>
<line x1="46" x2="466" y1="395.5" y2="395.5" stroke="#0000b0"/>
<line x1="45" x2="466" y1="408.5" y2="408.5" stroke="#0000ff"/>
<line x1="46" x2="466" y1="421.5" y2="421.5" stroke="#0000b0"/>
<line x1="45" x2="466" y1="434.5" y2="434.5" stroke="#0000ff"/>
<rect x="53" y="421.2" width="1" height="13.3" fill="#50e010"/>
<rect x="63" y="407.9" width="1" height="26.6" fill="#90f010"/>
<rect x="66" y="421.2" width="1" height="13.3" fill="#50e010"/>
<rect x="115" y="421.2" width="1" height="13.3" fill="#50e010"/>
<rect x="127" y="421.2" width="2" height="13.3" fill="#50e010"/>
<rect x="128" y="407.9" width="1" height="26.6" fill="#90f010"/>
<rect x="139" y="421.2" width="1" height="13.3" fill="#50e010"/>
<rect x="153" y="421.2" width="1" height="13.3" fill="#50e010"/>
<rect x="167" y="421.2" width="1" height="13.3" fill="#50e010"/>
<rect x="169" y="421.2" width="1" height="13.3" fill="#50e010"/>
<rect x="176" y="407.9" width="1" height="26.6" fill="#90f010"/>
<rect x="177" y="421.2" width="1" height="13.3" fill="#50e010"/>
<rect x="201" y="421.2" width="2" height="13.3" fill="#50e010"/>
<rect x="207" y="407.9" width="1" height="26.6" fill="#90f010"/>
<rect x="208" y="421.2" width="2" height="13.3" fill="#50e010"/>
<rect x="232" y="421.2" width="1" height="13.3" fill="#50e010"/>
<rect x="236" y="407.9" width="1" height="26.6" fill="#90f010"/>
<rect x="238" y="421.2" width="2" height="13.3" fill="#50e010"/>
<rect x="256" y="421.2" width="4" height="13.3" fill="#50e010"/>
<rect x="263" y="421.2" width="2" height="13.3" fill="#50e010"/>
<rect x="265" y="407.9" width="1" height="26.6" fill="#90f010"/>
<rect x="268" y="421.2" width="2" height="13.3" fill="#50e010"/>
<rect x="270" y="394.6" width="2" height="39.9" fill="#d0f020"/>
<rect x="272" y="421.2" width="2" height="13.3" fill="#50e010"/>
<rect x="280" y="394.6" width="3" height="39.9" fill="#d0f020"/>
<rect x="280" y="381.3" width="1" height="53.2" fill="#f0f020"/>
<rect x="282" y="381.3" width="1" height="53.2" fill="#f0f020"/>
<rect x="287" y="421.2" width="1" height="13.3" fill="#50e010"/>
<rect x="293" y="407.9" width="1" height="26.6" fill="#90f010"/>
<rect x="295" y="421.2" width="1" height="13.3" fill="#50e010"/>
<rect x="297" y="407.9" width="1" height="26.6" fill="#90f010"/>
<rect x="303" y="407.9" width="3" height="26.6" fill="#90f010"/>
<rect x="308" y="421.2" width="1" height="13.3" fill="#50e010"/>
<rect x="315" y="421.2" width="1" height="13.3" fill="#50e010"/>
<rect x="319" y="421.2" width="1" height="13.3" fill="#50e010"/>
<rect x="322" y="407.9" width="1" height="26.6" fill="#90f010"/>
<rect x="328" y="421.2" width="4" height="13.3" fill="#50e010"/>
<rect x="335" y="421.2" width="2" height="13.3" fill="#50e010"/>
<rect x="338" y="407.9" width="1" height="26.6" fill="#90f010"/>
<rect x="348" y="407.9" width="1" height="26.6" fill="#90f010"/>
<rect x="355" y="421.2" width="1" height="13.3" fill="#50e010"/>
<rect x="359" y="421.2" width="1" height="13.3" fill="#50e010"/>
<rect x="365" y="421.2" width="2" height="13.3" fill="#50e010"/>
<rect x="369" y="407.9" width="1" height="26.6" fill="#90f010"/>
<rect x="371" y="421.2" width="1" height="13.3" fill="#50e010"/>
<rect x="377" y="421.2" width="1" height="13.3" fill="#50e010"/>
<rect x="381" y="407.9" width="1" height="26.6" fill="#90f010"/>
<rect x="394" y="407.9" width="1" height="26.6" fill="#90f010"/>
<rect x="405" y="421.2" width="1" height="13.3" fill="#50e010"/>
<rect x="411" y="421.2" width="1" height="13.3" fill="#50e010"/>
<rect x="430" y="421.2" width="1" height="13.3" fill="#50e010"/>
<rect x="436" y="421.2" width="1" height="13.3" fill="#50e010"/>
<rect x="440" y="421.2" width="2" height="13.3" fill="#50e010"/>
<rect x="443" y="421.2" width="2" height="13.3" fill="#50e010"/>
<rect x="449" y="407.9" width="1" height="26.6" fill="#90f010"/>
<rect x="450" y="421.2" width="1" height="13.3" fill="#50e010"/>
<rect x="459" y="421.2" width="1" height="13.3" fill="#50e010"/>
<rect x="465" y="407.9" width="1" height="26.6" fill="#90f010"/>
<rect x="261" y="328.1" width="2" height="106.4" fill="url(#hot)"/>
<rect x="260" y="314.8" width="1.2" height="119.7" fill="url(#hot2)"/>
</g>
</svg>
<span class="t" id="t0" style="top:11px;color:#fff;font-size:13px;font-weight:bold;text-shadow:1px 1px 0 #0a1883;letter-spacing:-0.256px;left:25.30px;">Nero</span>
<span class="t" id="t1" style="top:11px;color:#fff;font-size:13px;font-weight:bold;text-shadow:1px 1px 0 #0a1883;letter-spacing:-0.860px;left:58.40px;">CD-DVD</span>
<span class="t" id="t2" style="top:11px;color:#fff;font-size:13px;font-weight:bold;text-shadow:1px 1px 0 #0a1883;letter-spacing:-0.363px;left:107.60px;">Speed</span>
<span class="t" id="t3" style="top:11px;color:#fff;font-size:13px;font-weight:bold;text-shadow:1px 1px 0 #0a1883;letter-spacing:0.900px;left:148.60px;">4.7.7.16</span>
<span class="t" id="t4" style="top:32px;color:#000;letter-spacing:-0.223px;left:9.10px;">Archivo</span>
<span class="t" id="t5" style="top:32px;color:#000;letter-spacing:-0.260px;left:57.10px;">Ejecutar prueba</span>
<span class="t" id="t6" style="top:32px;color:#000;letter-spacing:-0.009px;left:146.10px;">Extra</span>
<span class="t" id="t7" style="top:32px;color:#000;letter-spacing:-0.121px;left:183.60px;">Ayuda</span>
<span class="t" id="t8" style="top:65px;color:#000;letter-spacing:0.582px;left:171.10px;">[1:0]</span>
<span class="t" id="t9" style="top:65px;color:#000;letter-spacing:-0.524px;left:204.60px;">ATAPI iHAS524</span>
<span class="t" id="t10" style="top:65px;color:#000;left:287.40px;">B</span>
<span class="t" id="t11" style="top:65px;color:#000;letter-spacing:-0.760px;left:296.60px;">AL2A</span>
<span class="t" id="t12" style="top:65px;color:#000;letter-spacing:-0.243px;left:504.40px;">Inicio</span>
<span class="t" id="t13" style="top:65px;color:#000;letter-spacing:-0.483px;left:584.30px;">Salir</span>
<span class="t" id="t14" style="top:104px;color:#000;letter-spacing:-0.318px;left:17.60px;">Punto referencia</span>
<span class="t" id="t15" style="top:104px;color:#000;letter-spacing:-0.483px;left:107.90px;">Crear disco</span>
<span class="t" id="t16" style="top:104px;color:#000;letter-spacing:-0.173px;left:172.60px;">Info disco</span>
<span class="t" id="t17" style="top:102px;color:#000;letter-spacing:-0.400px;left:230.60px;">Calidad del disco</span>
<span class="t" id="t18" style="top:104px;color:#000;letter-spacing:-0.347px;left:323.30px;">ScanDisc</span>
<span class="t" id="t19" style="top:126px;color:#0046d5;letter-spacing:-0.313px;left:500.10px;">Info disco</span>
<span class="t" id="t20" style="top:141px;color:#000;letter-spacing:-0.268px;left:499.60px;">Tipo:</span>
<span class="t" id="t21" style="top:158px;color:#000;letter-spacing:-0.468px;left:499.60px;">ID:</span>
<span class="t" id="t22" style="top:176px;color:#000;letter-spacing:-0.395px;left:499.60px;">Fecha:</span>
<span class="t" id="t23" style="top:193px;color:#000;letter-spacing:-0.490px;left:499.60px;">Etiqueta:</span>
<span class="t" id="t24" style="top:141px;color:#00007c;letter-spacing:-0.325px;left:544.90px;">DVD+R DL</span>
<span class="t" id="t25" style="top:158px;color:#00007c;letter-spacing:-0.346px;left:544.90px;">MKM 003</span>
<span class="t" id="t26" style="top:176px;color:#00007c;letter-spacing:0.600px;left:544.90px;">n/a</span>
<span class="t" id="t27" style="top:193px;color:#00007c;letter-spacing:-0.674px;left:544.90px;">CD_ROM</span>
<span class="t" id="t28" style="top:217px;color:#0046d5;letter-spacing:-0.398px;left:500.20px;">Configuración</span>
<span class="t" id="t29" style="top:236px;color:#000;letter-spacing:-0.628px;left:504.00px;">Máximo</span>
<span class="t" id="t30" style="top:264px;color:#000;letter-spacing:-0.278px;left:502.00px;">Inicio:</span>
<span class="t" id="t31" style="top:287px;color:#000;letter-spacing:-0.718px;left:502.00px;">Fin:</span>
<span class="t" id="t32" style="top:262px;color:#000;letter-spacing:-0.547px;left:557.30px;">0000 MB</span>
<span class="t" id="t33" style="top:285px;color:#000;letter-spacing:-0.547px;left:557.30px;">8334 MB</span>
<span class="t" id="t34" style="top:304px;color:#000;letter-spacing:-0.422px;left:518.10px;">Expl rápida</span>
<span class="t" id="t35" style="top:322px;color:#000;letter-spacing:-0.415px;left:518.10px;">Mostrar C1/PIE</span>
<span class="t" id="t36" style="top:337px;color:#000;letter-spacing:-0.426px;left:518.10px;">Mostrar C2/PIF</span>
<span class="t" id="t37" style="top:353px;color:#000;letter-spacing:-0.428px;left:518.10px;">Mostrar Jitter</span>
<span class="t" id="t38" style="top:369px;color:#000;letter-spacing:-0.340px;left:518.10px;">Mostrar veloc lectura</span>
<span class="t" id="t39" style="top:384px;color:#aca899;letter-spacing:-0.354px;left:518.10px;">Mostrar veloc escrit</span>
<span class="t" id="t40" style="top:406px;color:#000;letter-spacing:-0.219px;left:551.60px;">Avanzado</span>
<span class="t" id="t41" style="top:440px;color:#000;letter-spacing:-0.265px;left:502.00px;">Puntuación</span>
<span class="t" id="t42" style="top:440px;color:#00007c;letter-spacing:0.352px;right:24.05px;">57</span>
<span class="t" id="t43" style="top:474px;color:#000;letter-spacing:-0.562px;left:502.00px;">Progreso:</span>
<span class="t" id="t44" style="top:490px;color:#000;letter-spacing:-0.430px;left:502.00px;">Posición:</span>
<span class="t" id="t45" style="top:505px;color:#000;letter-spacing:-0.328px;left:502.00px;">Velocidad:</span>
<span class="t" id="t46" style="top:474px;color:#00007c;letter-spacing:-0.562px;right:24.46px;">100 %</span>
<span class="t" id="t47" style="top:490px;color:#00007c;letter-spacing:-0.319px;right:24.22px;">8333 MB</span>
<span class="t" id="t48" style="top:505px;color:#00007c;letter-spacing:-0.242px;right:24.14px;">3.34 X</span>
<span class="t" id="t49" style="top:459px;color:#000;letter-spacing:-0.597px;left:35.60px;">PI Errors</span>
<span class="t" id="t50" style="top:474px;color:#000;letter-spacing:-0.625px;left:22.50px;">Promedio:</span>
<span class="t" id="t51" style="top:489px;color:#000;letter-spacing:-0.665px;left:22.50px;">Máximo:</span>
<span class="t" id="t52" style="top:504px;color:#000;letter-spacing:-0.117px;left:22.50px;">Total:</span>
<span class="t" id="t53" style="top:474px;color:#00007c;letter-spacing:-0.148px;right:494.85px;">3.46</span>
<span class="t" id="t54" style="top:489px;color:#00007c;letter-spacing:-0.148px;right:494.85px;">36</span>
<span class="t" id="t55" style="top:504px;color:#00007c;letter-spacing:-0.155px;right:494.85px;">115419</span>
<span class="t" id="t56" style="top:459px;color:#000;letter-spacing:-0.524px;left:193.60px;">PI Failures</span>
<span class="t" id="t57" style="top:474px;color:#000;letter-spacing:-0.625px;left:181.20px;">Promedio:</span>
<span class="t" id="t58" style="top:489px;color:#000;letter-spacing:-0.665px;left:181.20px;">Máximo:</span>
<span class="t" id="t59" style="top:504px;color:#000;letter-spacing:-0.117px;left:181.20px;">Total:</span>
<span class="t" id="t60" style="top:474px;color:#00007c;letter-spacing:-0.248px;right:336.75px;">0.01</span>
<span class="t" id="t61" style="top:489px;color:#00007c;right:336.50px;">9</span>
<span class="t" id="t62" style="top:504px;color:#00007c;letter-spacing:-0.423px;right:336.92px;">3996</span>
<span class="t" id="t63" style="top:459px;color:#000;letter-spacing:-0.304px;left:351.40px;">Jitter</span>
<span class="t" id="t64" style="top:474px;color:#000;letter-spacing:-0.625px;left:340.20px;">Promedio:</span>
<span class="t" id="t65" style="top:489px;color:#000;letter-spacing:-0.665px;left:340.20px;">Máximo:</span>
<span class="t" id="t66" style="top:509px;color:#000;letter-spacing:-0.665px;left:340.20px;">Errores PO:</span>
<span class="t" id="t67" style="top:474px;color:#00007c;right:176.90px;">-</span>
<span class="t" id="t68" style="top:489px;color:#00007c;right:176.90px;">-</span>
<span class="t" id="t69" style="top:509px;color:#00007c;right:176.90px;">-</span>
<span class="t" id="t70" style="top:131px;color:#000;font-size:12px;transform:scaleX(0.9);transform-origin:100% 50%;letter-spacing:0.088px;right:604.31px;">50</span>
<span class="t" id="t71" style="top:158px;color:#000;font-size:12px;transform:scaleX(0.9);transform-origin:100% 50%;letter-spacing:0.088px;right:604.31px;">40</span>
<span class="t" id="t72" style="top:184px;color:#000;font-size:12px;transform:scaleX(0.9);transform-origin:100% 50%;letter-spacing:0.088px;right:604.31px;">30</span>
<span class="t" id="t73" style="top:211px;color:#000;font-size:12px;transform:scaleX(0.9);transform-origin:100% 50%;letter-spacing:0.088px;right:604.31px;">20</span>
<span class="t" id="t74" style="top:238px;color:#000;font-size:12px;transform:scaleX(0.9);transform-origin:100% 50%;letter-spacing:0.088px;right:604.31px;">10</span>
<span class="t" id="t75" style="top:293px;color:#000;font-size:12px;transform:scaleX(0.9);transform-origin:100% 50%;letter-spacing:0.088px;right:604.31px;">10</span>
<span class="t" id="t76" style="top:320px;color:#000;font-size:12px;transform:scaleX(0.9);transform-origin:100% 50%;right:604.40px;">8</span>
<span class="t" id="t77" style="top:346px;color:#000;font-size:12px;transform:scaleX(0.9);transform-origin:100% 50%;right:604.40px;">6</span>
<span class="t" id="t78" style="top:373px;color:#000;font-size:12px;transform:scaleX(0.9);transform-origin:100% 50%;right:604.40px;">4</span>
<span class="t" id="t79" style="top:400px;color:#000;font-size:12px;transform:scaleX(0.9);transform-origin:100% 50%;right:604.40px;">2</span>
<span class="t" id="t80" style="top:275px;color:#000;font-size:12px;transform:scaleX(0.9);transform-origin:0 50%;letter-spacing:0.227px;left:42.15px;">0.0</span>
<span class="t" id="t81" style="top:437px;color:#000;font-size:12px;transform:scaleX(0.9);transform-origin:0 50%;letter-spacing:0.227px;left:42.15px;">0.0</span>
<span class="t" id="t82" style="top:275px;color:#000;font-size:12px;transform:scaleX(0.9);transform-origin:0 50%;letter-spacing:0.227px;left:94.45px;">1.0</span>
<span class="t" id="t83" style="top:437px;color:#000;font-size:12px;transform:scaleX(0.9);transform-origin:0 50%;letter-spacing:0.227px;left:94.45px;">1.0</span>
<span class="t" id="t84" style="top:275px;color:#000;font-size:12px;transform:scaleX(0.9);transform-origin:0 50%;letter-spacing:0.227px;left:146.75px;">2.0</span>
<span class="t" id="t85" style="top:437px;color:#000;font-size:12px;transform:scaleX(0.9);transform-origin:0 50%;letter-spacing:0.227px;left:146.75px;">2.0</span>
<span class="t" id="t86" style="top:275px;color:#000;font-size:12px;transform:scaleX(0.9);transform-origin:0 50%;letter-spacing:0.227px;left:199.05px;">3.0</span>
<span class="t" id="t87" style="top:437px;color:#000;font-size:12px;transform:scaleX(0.9);transform-origin:0 50%;letter-spacing:0.227px;left:199.05px;">3.0</span>
<span class="t" id="t88" style="top:275px;color:#000;font-size:12px;transform:scaleX(0.9);transform-origin:0 50%;letter-spacing:0.227px;left:251.35px;">4.0</span>
<span class="t" id="t89" style="top:437px;color:#000;font-size:12px;transform:scaleX(0.9);transform-origin:0 50%;letter-spacing:0.227px;left:251.35px;">4.0</span>
<span class="t" id="t90" style="top:275px;color:#000;font-size:12px;transform:scaleX(0.9);transform-origin:0 50%;letter-spacing:0.227px;left:303.65px;">5.0</span>
<span class="t" id="t91" style="top:437px;color:#000;font-size:12px;transform:scaleX(0.9);transform-origin:0 50%;letter-spacing:0.227px;left:303.65px;">5.0</span>
<span class="t" id="t92" style="top:275px;color:#000;font-size:12px;transform:scaleX(0.9);transform-origin:0 50%;letter-spacing:0.227px;left:355.95px;">6.0</span>
<span class="t" id="t93" style="top:437px;color:#000;font-size:12px;transform:scaleX(0.9);transform-origin:0 50%;letter-spacing:0.227px;left:355.95px;">6.0</span>
<span class="t" id="t94" style="top:275px;color:#000;font-size:12px;transform:scaleX(0.9);transform-origin:0 50%;letter-spacing:0.227px;left:408.25px;">7.0</span>
<span class="t" id="t95" style="top:437px;color:#000;font-size:12px;transform:scaleX(0.9);transform-origin:0 50%;letter-spacing:0.227px;left:408.25px;">7.0</span>
<span class="t" id="t96" style="top:275px;color:#000;font-size:12px;transform:scaleX(0.9);transform-origin:0 50%;letter-spacing:0.227px;left:460.55px;">8.0</span>
<span class="t" id="t97" style="top:437px;color:#000;font-size:12px;transform:scaleX(0.9);transform-origin:0 50%;letter-spacing:0.227px;left:460.55px;">8.0</span>
<span class="t" id="t98" style="top:131px;color:#000;font-size:12px;transform:scaleX(0.9);transform-origin:0 50%;letter-spacing:0.138px;left:470.30px;">16</span>
<span class="t" id="t99" style="top:147px;color:#000;font-size:12px;transform:scaleX(0.9);transform-origin:0 50%;letter-spacing:0.138px;left:470.30px;">14</span>
<span class="t" id="t100" style="top:164px;color:#000;font-size:12px;transform:scaleX(0.9);transform-origin:0 50%;letter-spacing:0.138px;left:470.30px;">12</span>
<span class="t" id="t101" style="top:181px;color:#000;font-size:12px;transform:scaleX(0.9);transform-origin:0 50%;letter-spacing:0.138px;left:470.30px;">10</span>
<span class="t" id="t102" style="top:197px;color:#000;font-size:12px;transform:scaleX(0.9);transform-origin:0 50%;left:470.30px;">8</span>
<span class="t" id="t103" style="top:214px;color:#000;font-size:12px;transform:scaleX(0.9);transform-origin:0 50%;left:470.30px;">6</span>
<span class="t" id="t104" style="top:230px;color:#000;font-size:12px;transform:scaleX(0.9);transform-origin:0 50%;left:470.30px;">4</span>
<span class="t" id="t105" style="top:247px;color:#000;font-size:12px;transform:scaleX(0.9);transform-origin:0 50%;left:470.30px;">2</span>
<span class="t" id="t106" style="top:293px;color:#000;font-size:12px;transform:scaleX(0.9);transform-origin:0 50%;letter-spacing:0.138px;left:470.30px;">10</span>
<span class="t" id="t107" style="top:320px;color:#000;font-size:12px;transform:scaleX(0.9);transform-origin:0 50%;left:470.30px;">8</span>
<span class="t" id="t108" style="top:346px;color:#000;font-size:12px;transform:scaleX(0.9);transform-origin:0 50%;left:470.30px;">6</span>
<span class="t" id="t109" style="top:373px;color:#000;font-size:12px;transform:scaleX(0.9);transform-origin:0 50%;left:470.30px;">4</span>
<span class="t" id="t110" style="top:400px;color:#000;font-size:12px;transform:scaleX(0.9);transform-origin:0 50%;left:470.30px;">2</span>
<!-- clipped leading digits on right axis + divider line -->
<div class="abs" style="left:468px;top:152px;width:8px;height:10px;background:#fbfbfd"></div>
<div class="abs" style="left:468px;top:169px;width:8px;height:10px;background:#fbfbfd"></div>
<div class="abs" style="left:468px;top:185px;width:8px;height:10px;background:#fbfbfc"></div>
<div class="abs" style="left:473px;top:138px;width:1px;height:135px;background:#c0c0c0"></div>
<div class="abs" style="left:473px;top:300px;width:1px;height:136px;background:#c8c8c8"></div>
<div class="abs" style="left:466px;top:156px;width:4px;height:1px;background:#00f"></div>
<div class="abs" style="left:466px;top:173px;width:4px;height:1px;background:#00f"></div>
<div class="abs" style="left:466px;top:189px;width:4px;height:1px;background:#00f"></div>


</div>
</body></html>
